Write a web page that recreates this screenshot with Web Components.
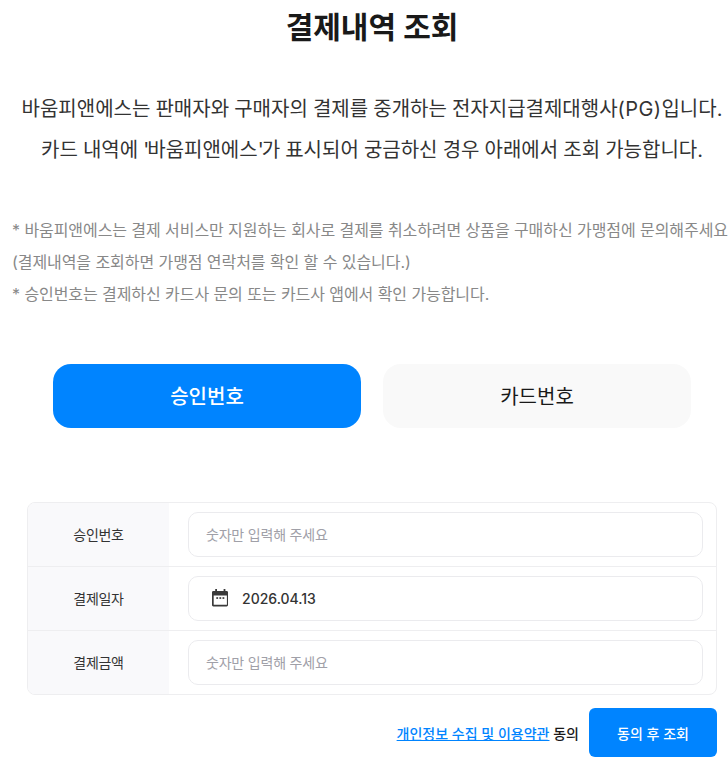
<!DOCTYPE html>
<html lang="ko">
<head>
<meta charset="utf-8">
<title>결제내역 조회</title>
<style>
  html, body { margin: 0; padding: 0; background: #fff; overflow: hidden; }
  body { font-family: Inter, "Noto Sans CJK KR", sans-serif; color: #191919; }
</style>
</head>
<body>
<payment-page></payment-page>

<script>
class PageIntro extends HTMLElement {
    connectedCallback() {
        this.attachShadow({ mode: 'open' });
        this.shadowRoot.innerHTML = `
            <style>
                :host { display: block; }
                h1 {
                    margin: 0;
                    padding-top: 6px;
                    height: 43px;
                    line-height: 43px;
                    font-size: 30px;
                    font-weight: 700;
                    text-align: center;
                    color: #191919;
                }
                .lead {
                    margin: 0;
                    padding-top: 40px;
                    font-size: 20px;
                    font-weight: 400;
                    line-height: 41px;
                    word-spacing: -0.5px;
                    text-align: center;
                    color: #333;
                }
                .lead .wide { letter-spacing: 0.4px; }
                .lead .quote { letter-spacing: -2px; }
                .notes {
                    margin: 0;
                    padding: 43px 0 0 12px;
                    font-size: 16px;
                    font-weight: 400;
                    line-height: 32px;
                    letter-spacing: -0.07px;
                    color: #888;
                    white-space: nowrap;
                }
            </style>
            <h1>결제내역 조회</h1>
            <p class="lead">바움피앤에스는 판매자와 구매자의 결제를 중개하는 전자지급결제대행사<span class="wide">(PG)</span>입니다.<br>카드 내역에 <span class="quote">'</span>바움피앤에스<span class="quote">'</span>가 표시되어 궁금하신 경우 아래에서 조회 가능합니다.</p>
            <p class="notes">* 바움피앤에스는 결제 서비스만 지원하는 회사로 결제를 취소하려면 상품을 구매하신 가맹점에 문의해주세요<br>(결제내역을 조회하면 가맹점 연락처를 확인 할 수 있습니다.)<br>* 승인번호는 결제하신 카드사 문의 또는 카드사 앱에서 확인 가능합니다.</p>
        `;
    }
}

class SearchTabs extends HTMLElement {
    connectedCallback() {
        this.attachShadow({ mode: 'open' });
        this.shadowRoot.innerHTML = `
            <style>
                :host {
                    display: flex;
                    gap: 22px;
                    padding: 54px 53px 0;
                }
                .tab {
                    flex: 1;
                    height: 64px;
                    border: 0;
                    border-radius: 18px;
                    padding: 0 0 2px;
                    font: 400 20px Inter, "Noto Sans CJK KR", sans-serif;
                    background: #f9f9f9;
                    color: #191919;
                }
                .tab.on { background: #0084ff; color: #fff; font-weight: 500; }
            </style>
            <button class="tab on">승인번호</button>
            <button class="tab">카드번호</button>
        `;
    }
}

class FormRow extends HTMLElement {
    connectedCallback() {
        const label = this.getAttribute('label');
        this.attachShadow({ mode: 'open' });
        this.shadowRoot.innerHTML = `
            <style>
                :host {
                    display: grid;
                    grid-template-columns: 141px 1fr;
                    height: 64px;
                    box-sizing: border-box;
                    border-bottom: 1px solid #eeeef0;
                }
                :host([last]) { border-bottom: 0; height: 63px; }
                .label {
                    display: flex;
                    align-items: center;
                    justify-content: center;
                    padding-bottom: 2px;
                    background: #f9f9fb;
                    font-size: 14px;
                    font-weight: 400;
                    letter-spacing: -0.3px;
                    color: #333;
                }
                .cell { padding: 9px 13px 9px 19px; }
                .field {
                    display: flex;
                    align-items: center;
                    box-sizing: border-box;
                    height: 45px;
                    padding: 0 17px 1px;
                    border: 1px solid #ebebee;
                    border-radius: 10px;
                    font-size: 14px;
                    letter-spacing: -0.2px;
                    color: #333;
                }
            </style>
            <div class="label">${label}</div>
            <div class="cell"><div class="field"><slot></slot></div></div>
        `;
    }
}

class SearchForm extends HTMLElement {
    connectedCallback() {
        this.attachShadow({ mode: 'open' });
        this.shadowRoot.innerHTML = `
            <style>
                :host {
                    display: block;
                    margin: 74px 27px 0;
                    border: 1px solid #eeeef0;
                    border-radius: 8px;
                    overflow: hidden;
                }
            </style>
            <slot></slot>
        `;
    }
}

class AgreeBar extends HTMLElement {
    connectedCallback() {
        this.attachShadow({ mode: 'open' });
        this.shadowRoot.innerHTML = `
            <style>
                :host {
                    display: flex;
                    justify-content: flex-end;
                    align-items: center;
                    gap: 10px;
                    padding: 13px 27px 0 0;
                    font-size: 14px;
                    font-weight: 500;
                }
                a { color: #0084ff; text-decoration: underline; }
                button {
                    width: 128px;
                    height: 49px;
                    border: 0;
                    border-radius: 6px;
                    padding: 0;
                    background: #0084ff;
                    color: #fff;
                    font: 500 14px Inter, "Noto Sans CJK KR", sans-serif;
                }
            </style>
            <span><a href="#">개인정보 수집 및 이용약관</a> 동의</span>
            <button>동의 후 조회</button>
        `;
    }
}

class PaymentPage extends HTMLElement {
    connectedCallback() {
        this.attachShadow({ mode: 'open' });
        this.shadowRoot.innerHTML = `
            <style>
                /* the reference content is laid out wider than the window */
                :host { display: block; width: 744px; }
                .hint { color: #a0a0a8; }
                .date { display: flex; align-items: center; gap: 12px; color: #333; font-weight: 500; letter-spacing: 0; }
                svg { display: block; width: 18px; height: 18px; margin-left: 6px; }
            </style>
            <page-intro></page-intro>
            <search-tabs></search-tabs>
            <search-form>
                <form-row label="승인번호"><span class="hint">숫자만 입력해 주세요</span></form-row>
                <form-row label="결제일자">
                    <span class="date">
                        <svg viewBox="0 0 18 18" fill="#3a3a3a"><path fill-rule="evenodd" d="M3.2 0h1.8v2h6.600v-2h1.800v2h1.200c0.900 0 1.400 0.600 1.400 1.400v12.700c0 0.800-0.500 1.400-1.400 1.400H1.400C0.500 17.500 0 16.900 0 16.100V3.400C0 2.600 0.500 2 1.400 2h1.800zM1.700 6.600v9.200h13.200V6.600z"/><rect x="4.300" y="8.200" width="1.800" height="1.700"/><rect x="7.400" y="8.200" width="1.800" height="1.700"/><rect x="10.500" y="8.200" width="1.800" height="1.700"/></svg>
                        2026.04.13
                    </span>
                </form-row>
                <form-row label="결제금액" last><span class="hint">숫자만 입력해 주세요</span></form-row>
            </search-form>
            <agree-bar></agree-bar>
        `;
    }
}

customElements.define('page-intro', PageIntro);
customElements.define('search-tabs', SearchTabs);
customElements.define('form-row', FormRow);
customElements.define('search-form', SearchForm);
customElements.define('agree-bar', AgreeBar);
customElements.define('payment-page', PaymentPage);
</script>
</body>
</html>
